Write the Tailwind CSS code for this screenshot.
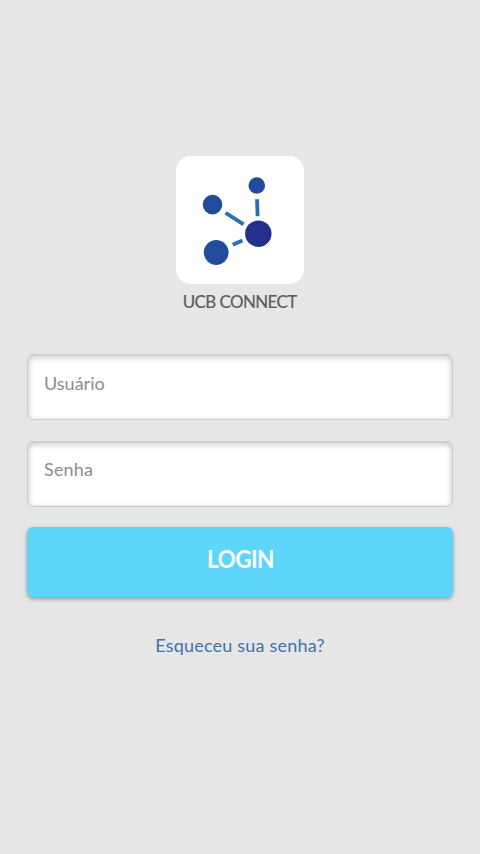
<!DOCTYPE html>
<html lang="pt-BR">
<head>
<meta charset="utf-8">
<title>UCB Connect</title>
<script src="https://cdn.jsdelivr.net/npm/@tailwindcss/browser@4"></script>
</head>
<body class="bg-[#e6e6e6] font-['Lato','Liberation_Sans',sans-serif]">
<main class="flex h-[854px] w-[480px] flex-col items-center overflow-hidden px-[27px] pt-[156px]">
  <div class="size-32 shrink-0 rounded-[15px] bg-white">
    <svg viewBox="0 0 128 128" class="size-32" aria-hidden="true">
      <g stroke="#2571b1" stroke-width="3.8">
        <path d="M81 43.3L81.6 60.2"/>
        <path d="M49.6 56.8L67.6 68.4"/>
        <path d="M56.8 88.8L66.4 84.4"/>
      </g>
      <g fill="#214c9c">
        <circle cx="80.8" cy="29.5" r="8.3"/>
        <circle cx="36.5" cy="48.6" r="9.8"/>
        <circle cx="40.2" cy="96.5" r="12.4"/>
        <circle cx="82.3" cy="77.7" r="13.2" fill="#25308c"/>
      </g>
    </svg>
  </div>
  <h1 class="mt-[5px] h-6 scale-x-[0.94] whitespace-nowrap text-[18px] leading-6 tracking-[-0.6px] text-[#5c5c5c] [-webkit-text-stroke:0.2px_#5c5c5c]">UCB CONNECT</h1>
  <form class="mt-[41px] flex w-full flex-col">
    <label class="block h-[66px] rounded-[6px] border border-[#cccccc] bg-white pl-4 pt-4 text-[18px] leading-6 text-[#8c8c8c] shadow-[inset_0_2px_6px_rgba(0,0,0,0.25)]">Usuário</label>
    <label class="mt-[21px] block h-[66px] rounded-[6px] border border-[#cccccc] bg-white pl-4 pt-[15px] text-[18px] leading-6 text-[#8c8c8c] shadow-[inset_0_2px_6px_rgba(0,0,0,0.25)]"><span class="tracking-[0.2px]">Senha</span></label>
    <button type="button" class="mt-5 flex h-[70px] justify-center rounded-[6px] bg-[#5ed6f9] pt-4 text-[24px] font-bold leading-8 tracking-[-0.7px] text-white shadow-[0_2px_4px_rgba(0,0,0,0.35)]"><span class="scale-x-[0.94]">LOGIN</span></button>
  </form>
  <a class="mt-9 whitespace-nowrap text-[18px] leading-6 tracking-[0.2px] text-[#3f74ab]">Esqueceu sua senha?</a>
</main>
</body>
</html>
